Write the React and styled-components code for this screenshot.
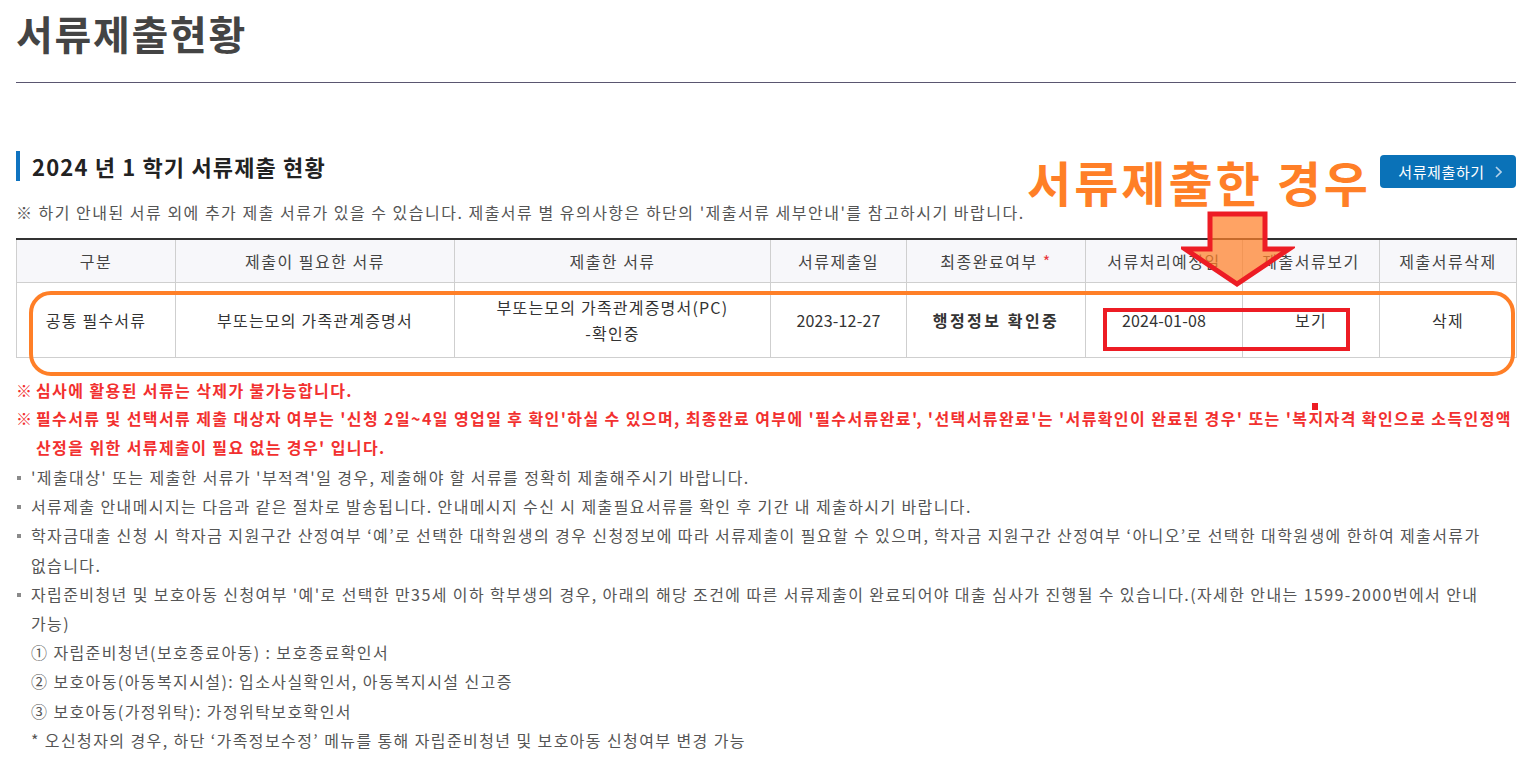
import React from "react";
import styled, { createGlobalStyle } from "styled-components";

const Global = createGlobalStyle`
  html, body { margin: 0; padding: 0; background: #fff; }
  body { font-family: "Noto Sans CJK KR", "Noto Sans", sans-serif; color: #555; }
  * { box-sizing: border-box; }
`;

const Page = styled.div`
  position: relative;
  width: 1526px;
  padding: 0 10px 0 16px;
`;

const Title = styled.h1`
  margin: 9px 0 0;
  font-size: 40px;
  line-height: 48px;
  font-weight: 700;
  letter-spacing: 1.7px;
  color: #444;
`;

const Rule = styled.hr`
  margin: 25px 0 0;
  border: 0;
  height: 1px;
  background: #5a5670;
`;

const SectionRow = styled.div`
  display: flex;
  justify-content: space-between;
  align-items: flex-start;
  margin-top: 68px;
`;

const SectionTitle = styled.h2`
  margin: 0;
  height: 30px;
  border-left: 4px solid #0f73c0;
  padding-left: 12px;
  font-size: 22px;
  line-height: 30px;
  font-weight: 700;
  letter-spacing: 1.15px;
  color: #222;
`;

const SubmitButton = styled.button`
  margin-top: 4px;
  height: 33px;
  width: 136px;
  border: 0;
  border-radius: 4px;
  background: #0a72b8;
  color: #fff;
  font-family: inherit;
  font-size: 15px;
  letter-spacing: 0.6px;
  display: flex;
  align-items: center;
  justify-content: center;
  gap: 10px;
  padding: 0 0 0 4px;
`;

const Note = styled.p`
  margin: 12px 0 0;
  font-size: 16px;
  line-height: 24px;
  color: #555;
  letter-spacing: 1.5px;
  white-space: nowrap;
`;

const Table = styled.table`
  margin-top: 14px;
  width: 1500px;
  border-collapse: collapse;
  table-layout: fixed;
  border-top: 2px solid #333;
`;

const Th = styled.th`
  height: 43px;
  background: #f7f7fa;
  border: 1px solid #cfcfcf;
  border-top: 0;
  font-weight: 400;
  font-size: 16px;
  color: #444;
  letter-spacing: 1.5px;
`;

const Star = styled.span`
  color: #e8383d;
`;

const Td = styled.td`
  height: 75px;
  border: 1px solid #cfcfcf;
  text-align: center;
  font-size: 16px;
  line-height: 26px;
  color: #333;
  letter-spacing: ${(p) => (p.$bold ? "2.5px" : p.$num ? "0.2px" : "1.2px")};
  font-weight: ${(p) => (p.$bold ? 700 : 400)};
`;

const Alerts = styled.div`
  margin-top: 18px;
`;

const Bullets = styled.div`
  margin-top: 2px;
`;

const Item = styled.div`
  display: flex;
  font-size: 16px;
  line-height: ${(p) => (p.$alert ? "28.5px" : "29.2px")};
  white-space: nowrap;
  color: ${(p) => (p.$alert ? "#f2302f" : "#555")};
  font-weight: ${(p) => (p.$alert ? 700 : 400)};
  letter-spacing: 1.4px;
`;

const Mark = styled.span`
  flex: 0 0 ${(p) => (p.$w || 15)}px;
  display: flex;
  align-items: flex-start;
  letter-spacing: 0;
`;

const Square = styled.i`
  display: block;
  width: 4px;
  height: 4px;
  margin: 13px 0 0 1px;
  background: #8a8a8a;
`;

const Text = styled.span`
  flex: 1;
`;

const Callout = styled.div`
  position: absolute;
  left: 1027px;
  top: 142px;
  font-size: 48px;
  line-height: 60px;
  font-weight: 700;
  letter-spacing: 3px;
  color: #ff7f27;
  white-space: nowrap;
`;

const RowFrame = styled.div`
  position: absolute;
  left: 29px;
  top: 282px;
  width: 1486px;
  height: 85px;
  border: 4px solid #ff7f27;
  border-radius: 22px;
  pointer-events: none;
`;

const RedBox = styled.div`
  position: absolute;
  left: 1103px;
  top: 299px;
  width: 247px;
  height: 43px;
  border: 4px solid #ed1c24;
`;

const ArrowSvg = styled.svg`
  position: absolute;
  left: 1181px;
  top: 201px;
`;

const Dot = styled.i`
  position: absolute;
  left: 1312px;
  top: 394px;
  width: 6px;
  height: 7px;
  background: #ed1c24;
`;

const cols = [159, 279, 316, 136, 179, 157, 137, 137];

export default function App() {
  return (
    <Page>
      <Global />
      <Title>서류제출현황</Title>
      <Rule />
      <SectionRow>
        <SectionTitle>2024 년 1 학기 서류제출 현황</SectionTitle>
        <SubmitButton>
          서류제출하기
          <svg width="7" height="12" viewBox="0 0 7 12">
            <path d="M1 1 L6 6 L1 11" fill="none" stroke="#b5d3ea" strokeWidth="1.6" />
          </svg>
        </SubmitButton>
      </SectionRow>
      <Note>
        ※ 하기 안내된 서류 외에 추가 제출 서류가 있을 수 있습니다. 제출서류 별 유의사항은 하단의 '제출서류 세부안내'를 참고하시기 바랍니다.
      </Note>
      <Table>
        <colgroup>
          {cols.map((w, i) => (
            <col key={i} style={{ width: w }} />
          ))}
        </colgroup>
        <thead>
          <tr>
            <Th>구분</Th>
            <Th>제출이 필요한 서류</Th>
            <Th>제출한 서류</Th>
            <Th>서류제출일</Th>
            <Th>
              최종완료여부 <Star>*</Star>
            </Th>
            <Th>서류처리예정일</Th>
            <Th>제출서류보기</Th>
            <Th>제출서류삭제</Th>
          </tr>
        </thead>
        <tbody>
          <tr>
            <Td>공통 필수서류</Td>
            <Td>부또는모의 가족관계증명서</Td>
            <Td>
              부또는모의 가족관계증명서(PC)
              <br />
              -확인중
            </Td>
            <Td $num>2023-12-27</Td>
            <Td $bold>행정정보 확인중</Td>
            <Td $num>2024-01-08</Td>
            <Td>보기</Td>
            <Td>삭제</Td>
          </tr>
        </tbody>
      </Table>
      <Alerts>
        <Item $alert>
          <Mark $w={20}>※</Mark>
          <Text>심사에 활용된 서류는 삭제가 불가능합니다.</Text>
        </Item>
        <Item $alert>
          <Mark $w={20}>※</Mark>
          <Text>
            필수서류 및 선택서류 제출 대상자 여부는 '신청 2일~4일 영업일 후 확인'하실 수 있으며, 최종완료 여부에 '필수서류완료', '선택서류완료'는 '서류확인이 완료된 경우' 또는 '복지자격 확인으로 소득인정액
            <br />
            산정을 위한 서류제출이 필요 없는 경우' 입니다.
          </Text>
        </Item>
      </Alerts>
      <Bullets>
        <Item>
          <Mark><Square /></Mark>
          <Text>'제출대상' 또는 제출한 서류가 '부적격'일 경우, 제출해야 할 서류를 정확히 제출해주시기 바랍니다.</Text>
        </Item>
        <Item>
          <Mark><Square /></Mark>
          <Text>서류제출 안내메시지는 다음과 같은 절차로 발송됩니다. 안내메시지 수신 시 제출필요서류를 확인 후 기간 내 제출하시기 바랍니다.</Text>
        </Item>
        <Item>
          <Mark><Square /></Mark>
          <Text>
            학자금대출 신청 시 학자금 지원구간 산정여부 ‘예’로 선택한 대학원생의 경우 신청정보에 따라 서류제출이 필요할 수 있으며, 학자금 지원구간 산정여부 ‘아니오’로 선택한 대학원생에 한하여 제출서류가
            <br />
            없습니다.
          </Text>
        </Item>
        <Item>
          <Mark><Square /></Mark>
          <Text>
            자립준비청년 및 보호아동 신청여부 '예'로 선택한 만35세 이하 학부생의 경우, 아래의 해당 조건에 따른 서류제출이 완료되어야 대출 심사가 진행될 수 있습니다.(자세한 안내는 1599-2000번에서 안내
            <br />
            가능)
            <br />
            ① 자립준비청년(보호종료아동) : 보호종료확인서
            <br />
            ② 보호아동(아동복지시설): 입소사실확인서, 아동복지시설 신고증
            <br />
            ③ 보호아동(가정위탁): 가정위탁보호확인서
            <br />
            * 오신청자의 경우, 하단 ‘가족정보수정’ 메뉴를 통해 자립준비청년 및 보호아동 신청여부 변경 가능
          </Text>
        </Item>
      </Bullets>

      <Callout>서류제출한 경우</Callout>
      <RowFrame />
      <RedBox />
      <ArrowSvg width="114" height="80" viewBox="0 0 114 80">
        <polygon
          points="29,4 84,4 84,39 108,39 56,74 4,39 29,39"
          fill="rgba(255,128,40,0.72)"
          stroke="#ed1c24"
          strokeWidth="5"
          strokeLinejoin="miter"
        />
      </ArrowSvg>
      <Dot />
    </Page>
  );
}
